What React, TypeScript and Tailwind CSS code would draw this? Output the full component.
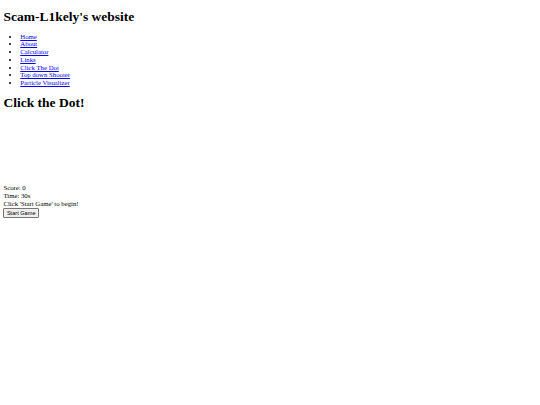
import React from 'react';

const links = [
  'Home',
  'About',
  'Calculator',
  'Links',
  'Click The Dot',
  'Top down Shooter',
  'Particle Visualizer',
];

export default function App() {
  return (
    <div className="min-h-[405px] w-[540px] bg-white px-[3.4px] pt-[9px] text-black font-['Liberation_Serif',serif] text-[6.75px] leading-[7.76px]">
      <h1 className="text-[13.5px] font-bold leading-[15.5px]">Scam-L1kely's website</h1>
      <nav>
        <ul className="mt-[8px] list-disc pl-[16.9px]">
          {links.map((l) => (
            <li key={l}>
              <a href="#" className="text-[#0000ee] underline">
                {l}
              </a>
            </li>
          ))}
        </ul>
      </nav>
      <h2 className="mt-[8px] text-[13.5px] font-bold leading-[15.5px]">Click the Dot!</h2>
      <div className="mt-[9px] h-[65px]" />
      <div>Score: 0</div>
      <div>Time: 30s</div>
      <div>Click 'Start Game' to begin!</div>
      <button className="rounded-[1px] border border-[#767676] bg-[#efefef] px-[2.5px] py-[1px] font-['Liberation_Sans',Arial,sans-serif] text-[5.6px] leading-[6.5px]">
        Start Game
      </button>
    </div>
  );
}
